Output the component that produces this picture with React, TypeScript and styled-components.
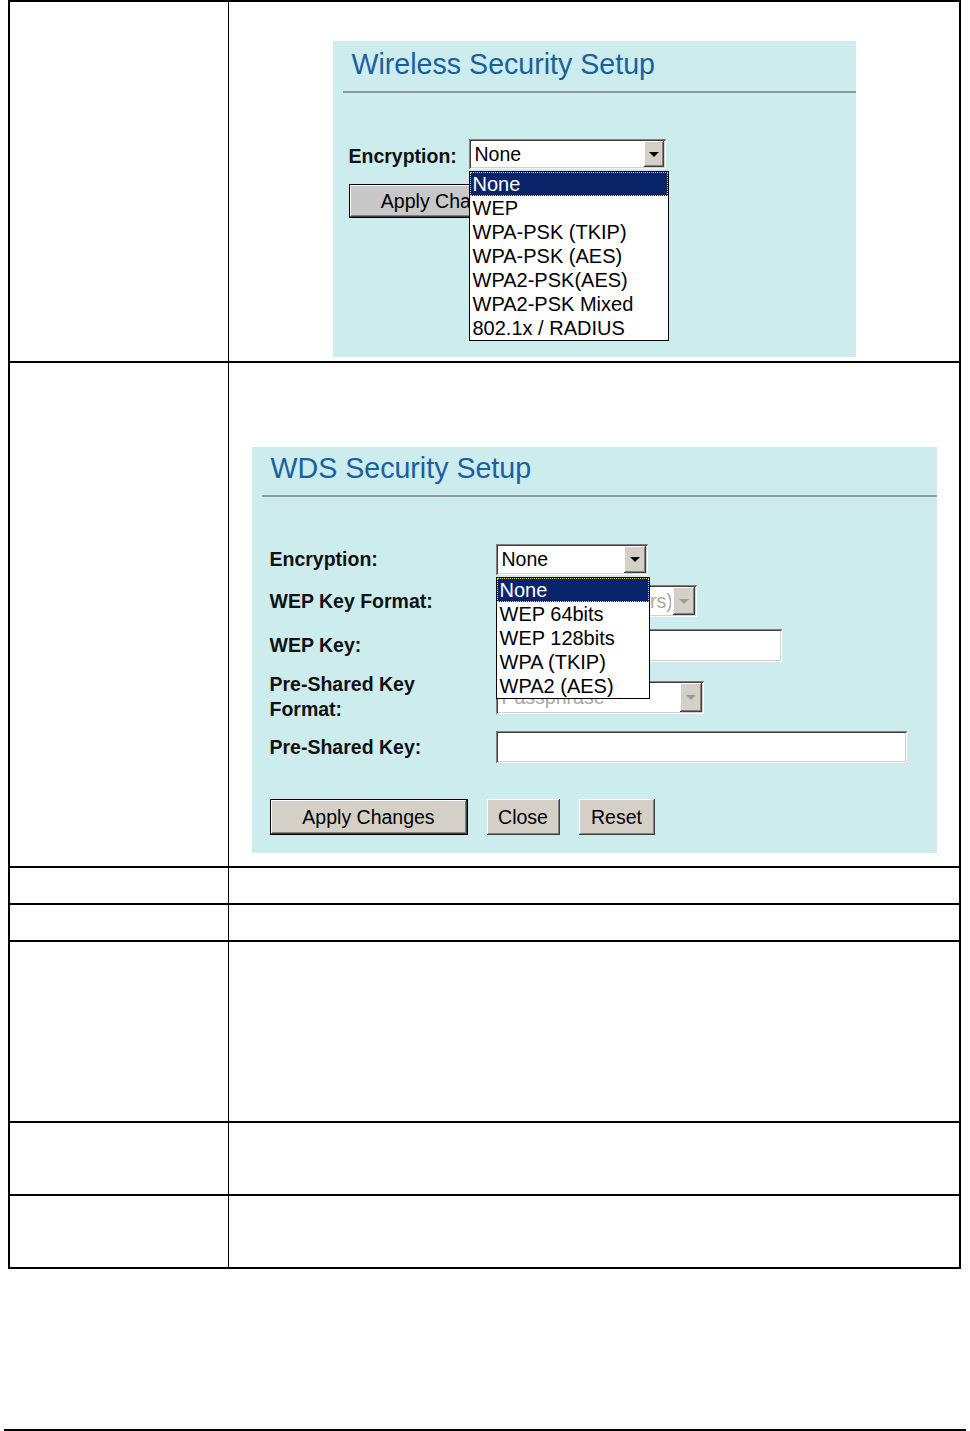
import styled, { createGlobalStyle } from "styled-components";

const GlobalStyle = createGlobalStyle`
  body {
    margin: 0;
    background: #ffffff;
    font-family: "Liberation Sans", Arial, sans-serif;
    color: #000000;
  }
`;

const Page = styled.div`
  width: 970px;
  height: 1431px;
  padding-left: 8px;
  box-sizing: border-box;
`;

const DocTable = styled.div`
  width: 953px;
  box-sizing: border-box;
  border: 2px solid #000;
  border-bottom: none;
`;

const Row = styled.div<{ $h: number }>`
  display: grid;
  grid-template-columns: 219px 1fr;
  height: ${(p) => p.$h}px;
  box-sizing: border-box;
  border-bottom: 2px solid #000;
`;

const KeyCell = styled.div`
  border-right: 1.5px solid #000;
`;

const ValueCell = styled.div<{ $pt?: number }>`
  display: flex;
  flex-direction: column;
  align-items: center;
  padding-top: ${(p) => p.$pt ?? 0}px;
`;

const BottomRule = styled.div`
  margin: 160px 0 0 -4px;
  width: 962px;
  height: 2px;
  background: #000;
`;

// painel azul claro do roteador
const Panel = styled.div<{ $w: number; $pt: number; $pb: number }>`
  width: ${(p) => p.$w}px;
  box-sizing: border-box;
  background: #cdecee;
  padding: ${(p) => p.$pt}px 0 ${(p) => p.$pb}px 0;
`;

const Title = styled.div`
  margin-left: 19px;
  font-size: 28.6px;
  line-height: 32px;
  color: #19609e;
  white-space: nowrap;
`;

const Rule = styled.div<{ $mb: number }>`
  margin: 11px 0 ${(p) => p.$mb}px 10px;
  height: 2px;
  background: #8f9a9c;
`;

const Form = styled.div<{ $left: number }>`
  display: flex;
  flex-direction: column;
  padding-left: ${(p) => p.$left}px;
`;

const FormRow = styled.div<{ $h: number; $labelW: number }>`
  display: grid;
  grid-template-columns: ${(p) => p.$labelW}px auto;
  align-items: center;
  height: ${(p) => p.$h}px;
`;

const Label = styled.div<{ $dy?: number }>`
  font-weight: bold;
  font-size: 19.5px;
  line-height: 25px;
  color: #111;
  padding-top: ${(p) => p.$dy ?? 0}px;
  white-space: nowrap;
`;

const sunken = `
  box-shadow: inset 1px 1px #808080, inset -1px -1px #ffffff,
    inset 2px 2px #404040, inset -2px -2px #d4d0c8;
`;

const SelectBox = styled.div<{ $w: number; $h: number }>`
  position: relative;
  display: flex;
  align-items: center;
  width: ${(p) => p.$w}px;
  height: ${(p) => p.$h}px;
  box-sizing: border-box;
  background: #ffffff;
  ${sunken}
`;

const SelectText = styled.div<{ $disabled?: boolean }>`
  flex: 1;
  padding-left: 6px;
  font-size: 19.5px;
  color: ${(p) => (p.$disabled ? "#a8a8a8" : "#000")};
  white-space: nowrap;
  overflow: hidden;
`;

const ArrowButton = styled.div<{ $w: number }>`
  display: flex;
  align-items: center;
  justify-content: center;
  width: ${(p) => p.$w}px;
  align-self: stretch;
  margin: 2px;
  background: #d4d0c8;
  box-shadow: inset -1px -1px #404040, inset 1px 1px #ffffff,
    inset -2px -2px #808080;
`;

const DropList = styled.div<{ $w: number }>`
  position: absolute;
  top: calc(100% + 2px);
  left: 0;
  z-index: 5;
  width: ${(p) => p.$w}px;
  box-sizing: border-box;
  background: #ffffff;
  border: 1px solid #000;
`;

const DropItem = styled.div<{ $selected?: boolean }>`
  height: 24px;
  line-height: 24px;
  padding-left: 3px;
  font-size: 20px;
  white-space: nowrap;
  color: ${(p) => (p.$selected ? "#ffffff" : "#000")};
  background: ${(p) => (p.$selected ? "#0a246a" : "transparent")};
  outline: ${(p) => (p.$selected ? "1px dotted #e8d860" : "none")};
  outline-offset: -1px;
`;

const TextBox = styled.div<{ $w: number; $h: number }>`
  width: ${(p) => p.$w}px;
  height: ${(p) => p.$h}px;
  box-sizing: border-box;
  background: #ffffff;
  ${sunken}
`;

const ButtonRow = styled.div<{ $mt: number }>`
  display: flex;
  gap: 19px;
  margin-top: ${(p) => p.$mt}px;
`;

const WinButton = styled.div<{ $w: number; $h: number; $default?: boolean; $bg?: string }>`
  display: flex;
  align-items: center;
  justify-content: center;
  width: ${(p) => p.$w}px;
  height: ${(p) => p.$h}px;
  box-sizing: border-box;
  background: ${(p) => p.$bg ?? "#d4d0c8"};
  border: ${(p) => (p.$default ? "1px solid #000" : "none")};
  box-shadow: inset -1px -1px #404040, inset 1px 1px #ffffff,
    inset -2px -2px #808080;
  font-size: 19.5px;
  color: #000;
  white-space: nowrap;
  overflow: hidden;
`;

const Arrow = ({ disabled }: { disabled?: boolean }) => (
  <svg width="10" height="5" viewBox="0 0 10 5">
    <path d="M0 0h10L5 5z" fill={disabled ? "#9a9a9a" : "#000"} />
  </svg>
);

type SelectProps = {
  w: number;
  h: number;
  value: string;
  arrowW?: number;
  disabled?: boolean;
  options?: string[];
  listW?: number;
};

const Select = (props: SelectProps) => (
  <SelectBox $w={props.w} $h={props.h}>
    <SelectText $disabled={props.disabled}>{props.value}</SelectText>
    <ArrowButton $w={props.arrowW ?? 20}>
      <Arrow disabled={props.disabled} />
    </ArrowButton>
    {props.options && (
      <DropList $w={props.listW ?? props.w}>
        {props.options.map((o, i) => (
          <DropItem key={o} $selected={i === 0}>
            {o}
          </DropItem>
        ))}
      </DropList>
    )}
  </SelectBox>
);

const wlanOptions = [
  "None",
  "WEP",
  "WPA-PSK (TKIP)",
  "WPA-PSK (AES)",
  "WPA2-PSK(AES)",
  "WPA2-PSK Mixed",
  "802.1x / RADIUS",
];

const wdsOptions = ["None", "WEP 64bits", "WEP 128bits", "WPA (TKIP)", "WPA2 (AES)"];

export default function App() {
  return (
    <Page>
      <GlobalStyle />
      <DocTable>
        <Row $h={361}>
          <KeyCell />
          <ValueCell $pt={39}>
            <Panel $w={523} $pt={7} $pb={139}>
              <Title>Wireless Security Setup</Title>
              <Rule $mb={41} />
              <Form $left={16}>
                <FormRow $h={40} $labelW={120}>
                  <Label $dy={5}>Encryption:</Label>
                  <Select w={197} h={30} value="None" options={wlanOptions} listW={200} />
                </FormRow>
                <ButtonRow $mt={10}>
                  <WinButton $w={197} $h={34} $default $bg="#c8c8c8">
                    Apply Changes
                  </WinButton>
                </ButtonRow>
              </Form>
            </Panel>
          </ValueCell>
        </Row>

        <Row $h={505}>
          <KeyCell />
          <ValueCell $pt={84}>
            <Panel $w={685} $pt={5} $pb={18}>
              <Title>WDS Security Setup</Title>
              <Rule $mb={41} />
              <Form $left={18}>
                <FormRow $h={42} $labelW={226}>
                  <Label>Encryption:</Label>
                  <Select w={152} h={31} value="None" arrowW={22} options={wdsOptions} listW={154} />
                </FormRow>
                <FormRow $h={42} $labelW={226}>
                  <Label>WEP Key Format:</Label>
                  <Select w={201} h={32} value="Hex (10 characters)" arrowW={22} disabled />
                </FormRow>
                <FormRow $h={46} $labelW={226}>
                  <Label>WEP Key:</Label>
                  <TextBox $w={286} $h={33} />
                </FormRow>
                <FormRow $h={58} $labelW={226}>
                  <Label>
                    Pre-Shared Key
                    <br />
                    Format:
                  </Label>
                  <Select w={208} h={33} value="Passphrase" arrowW={22} disabled />
                </FormRow>
                <FormRow $h={42} $labelW={226}>
                  <Label>Pre-Shared Key:</Label>
                  <TextBox $w={411} $h={32} />
                </FormRow>
                <ButtonRow $mt={31}>
                  <WinButton $w={198} $h={36} $default>
                    Apply Changes
                  </WinButton>
                  <WinButton $w={73} $h={36}>
                    Close
                  </WinButton>
                  <WinButton $w={76} $h={36}>
                    Reset
                  </WinButton>
                </ButtonRow>
              </Form>
            </Panel>
          </ValueCell>
        </Row>

        <Row $h={37}>
          <KeyCell />
          <ValueCell />
        </Row>
        <Row $h={37}>
          <KeyCell />
          <ValueCell />
        </Row>
        <Row $h={181}>
          <KeyCell />
          <ValueCell />
        </Row>
        <Row $h={73}>
          <KeyCell />
          <ValueCell />
        </Row>
        <Row $h={73}>
          <KeyCell />
          <ValueCell />
        </Row>
      </DocTable>
      <BottomRule />
    </Page>
  );
}
